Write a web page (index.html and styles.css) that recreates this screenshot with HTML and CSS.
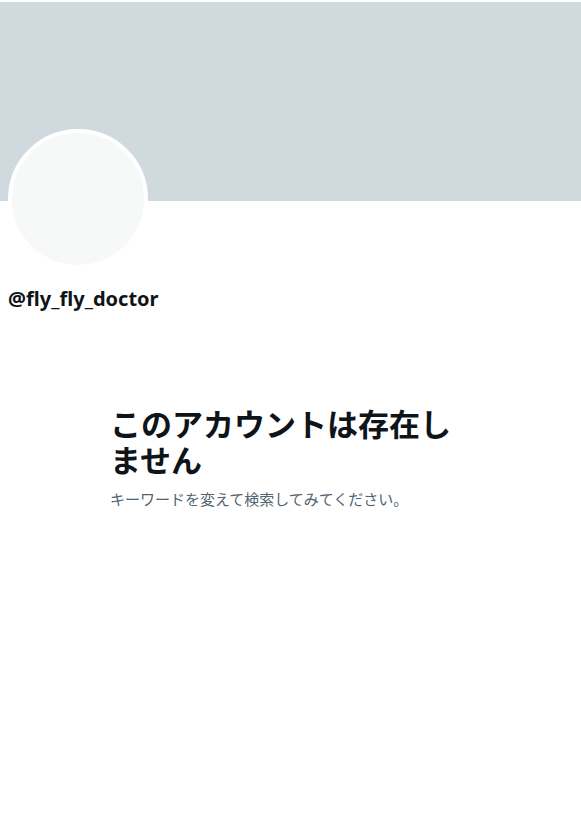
FILE: index.html
```html
<!DOCTYPE html>
<html lang="ja">
<head>
<meta charset="utf-8">
<link rel="stylesheet" href="styles.css">
</head>
<body>
<div class="page">
  <div class="banner"></div>
  <div class="profile">
    <div class="avatar"></div>
    <div class="handle">@fly_fly_doctor</div>
  </div>
  <div class="empty">
    <h1 class="empty-title">このアカウントは存在しません</h1>
    <p class="empty-sub">キーワードを変えて検索してみてください。</p>
  </div>
</div>
</body>
</html>
```
FILE: styles.css
```css
html, body {
  margin: 0;
  padding: 0;
  background: #ffffff;
}
body {
  font-family: "Noto Sans", "Noto Sans CJK JP", sans-serif;
  color: #0f1419;
}
.page {
  width: 581px;
  padding-top: 2px;
}
.banner {
  height: 199px;
  background: #cfd9de;
}
.profile {
  padding: 0 8px;
}
.avatar {
  width: 132px;
  height: 132px;
  margin-top: -72px;
  border: 4px solid #ffffff;
  border-radius: 50%;
  background: #f7f9f9;
}
.handle {
  margin-top: 18px;
  font-size: 20px;
  font-weight: 700;
  line-height: 24px;
}
.empty {
  margin: 94px 0 0 110px;
  width: 350px;
}
.empty-title {
  margin: 0;
  font-family: "Noto Sans CJK JP", sans-serif;
  font-size: 31px;
  font-weight: 700;
  line-height: 36px;
}
.empty-sub {
  margin: 12px 0 0;
  font-family: "Noto Sans CJK JP", sans-serif;
  font-size: 15px;
  line-height: 20px;
  color: #536471;
}
```
